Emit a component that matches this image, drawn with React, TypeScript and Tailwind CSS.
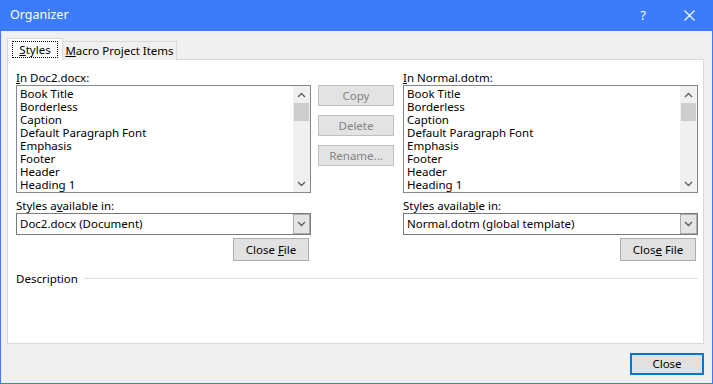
import type { ReactNode } from "react";

const styleNames = [
  "Book Title",
  "Borderless",
  "Caption",
  "Default Paragraph Font",
  "Emphasis",
  "Footer",
  "Header",
  "Heading 1",
];

function Chevron({ up }: { up?: boolean }) {
  return (
    <svg width="9" height="6" viewBox="0 0 9 6" className="block">
      <path
        d={up ? "M1 5 L4.5 1.5 L8 5" : "M1 1 L4.5 4.5 L8 1"}
        fill="none"
        stroke="#606060"
        strokeWidth="1.4"
      />
    </svg>
  );
}

function StyleList() {
  return (
    <div className="flex h-[108px] border border-[#828790] bg-white">
      <div className="flex-1 pl-[3px] pt-px">
        {styleNames.map((name) => (
          <div key={name} className="h-[13px] leading-[13px]">
            {name}
          </div>
        ))}
      </div>
      <div className="flex w-[17px] flex-col bg-[#f0f0f0]">
        <div className="flex h-[17px] items-center justify-center">
          <Chevron up />
        </div>
        <div className="mx-px h-[18px] bg-[#cdcdcd]" />
        <div className="flex-1" />
        <div className="flex h-[17px] items-center justify-center">
          <Chevron />
        </div>
      </div>
    </div>
  );
}

function Combo({ value }: { value: string }) {
  return (
    <div className="flex h-[22px] border border-[#7a7a7a] bg-white">
      <div className="flex flex-1 items-center pl-[3px]">{value}</div>
      <div className="flex w-[17px] items-center justify-center border border-[#adadad] bg-[#e5e5e5]">
        <Chevron />
      </div>
    </div>
  );
}

function Button({
  children,
  disabled,
  className = "",
}: {
  children: ReactNode;
  disabled?: boolean;
  className?: string;
}) {
  return (
    <div
      className={`flex w-[76px] items-center justify-center border ${
        disabled
          ? "border-[#bfbfbf] bg-[#e3e3e3] text-[#838383]"
          : "border-[#adadad] bg-[#e1e1e1] text-black"
      } ${className}`}
    >
      <span>{children}</span>
    </div>
  );
}

function Column({
  label,
  combo,
  availLabel,
  closeLabel,
}: {
  label: ReactNode;
  combo: string;
  availLabel: ReactNode;
  closeLabel: ReactNode;
}) {
  return (
    <div className="flex w-[295px] flex-col">
      <div className="h-[15px] leading-[15px]">{label}</div>
      <StyleList />
      <div className="mt-[5px] h-[15px] leading-[15px]">{availLabel}</div>
      <Combo value={combo} />
      <div className="mt-[3px] flex justify-end pr-[2px]">
        <Button className="h-[23px]">{closeLabel}</Button>
      </div>
    </div>
  );
}

export default function App() {
  return (
    <div
      className="flex h-[384px] w-[713px] flex-col border border-t-0 border-[#3c7bfc] bg-[#f0f0f0] text-[11.5px] text-black"
      style={{ fontFamily: '"Noto Sans", "Segoe UI", sans-serif' }}
    >
      <div className="flex h-[31px] items-center bg-[#3c7bfc] pl-[9px] text-white">
        <span className="flex-1 text-[12.5px]">Organizer</span>
        <span className="w-[46px] text-center text-[13px]">?</span>
        <div className="flex w-[46px] items-center justify-center">
          <svg width="11" height="11" viewBox="0 0 11 11">
            <path d="M0.5 0.5 L10.5 10.5 M10.5 0.5 L0.5 10.5" stroke="white" strokeWidth="1.1" />
          </svg>
        </div>
      </div>

      <div className="flex flex-1 flex-col pl-[6px] pr-[8px] pt-[7px]">
        <div className="relative z-10 -mb-px flex items-end">
          <div className="flex h-[22px] w-[56px] items-center justify-center border border-b-0 border-[#d9d9d9] bg-white">
            <span className="border border-dotted border-black px-[6px] leading-[15px]">
              <u>S</u>tyles
            </span>
          </div>
          <div className="flex h-[19px] w-[114px] items-center justify-center border border-b-0 border-l-0 border-[#d9d9d9] bg-[#f0f0f0]">
            <span>
              <u>M</u>acro Project Items
            </span>
          </div>
        </div>

        <div className="flex h-[285px] flex-col border border-[#d9d9d9] bg-white pl-[8px] pr-[5px] pt-[10px]">
          <div className="flex">
            <Column
              label={
                <span>
                  <u>I</u>n Doc2.docx:
                </span>
              }
              combo="Doc2.docx (Document)"
              availLabel={
                <span>
                  Styles a<u>v</u>ailable in:
                </span>
              }
              closeLabel={
                <span>
                  Close <u>F</u>ile
                </span>
              }
            />
            <div className="ml-[7px] mr-[9px] flex flex-col gap-[9px] pt-[15px]">
              <Button disabled className="h-[21px]">
                Copy
              </Button>
              <Button disabled className="h-[21px]">
                Delete
              </Button>
              <Button disabled className="h-[21px]">
                Rename...
              </Button>
            </div>
            <Column
              label={
                <span>
                  <u>I</u>n Normal.dotm:
                </span>
              }
              combo="Normal.dotm (global template)"
              availLabel={
                <span>
                  Styles availa<u>b</u>le in:
                </span>
              }
              closeLabel={
                <span>
                  Clos<u>e</u> File
                </span>
              }
            />
          </div>
          <div className="mt-[10px] flex h-[15px] items-center gap-[6px]">
            <span>Description</span>
            <div className="h-px flex-1 bg-[#dcdcdc]" />
          </div>
        </div>

        <div className="mt-[9px] flex justify-end">
          <div className="flex h-[22px] w-[74px] items-center justify-center border-2 border-[#0078d7] bg-[#e1e1e1]">
            Close
          </div>
        </div>
      </div>
    </div>
  );
}
